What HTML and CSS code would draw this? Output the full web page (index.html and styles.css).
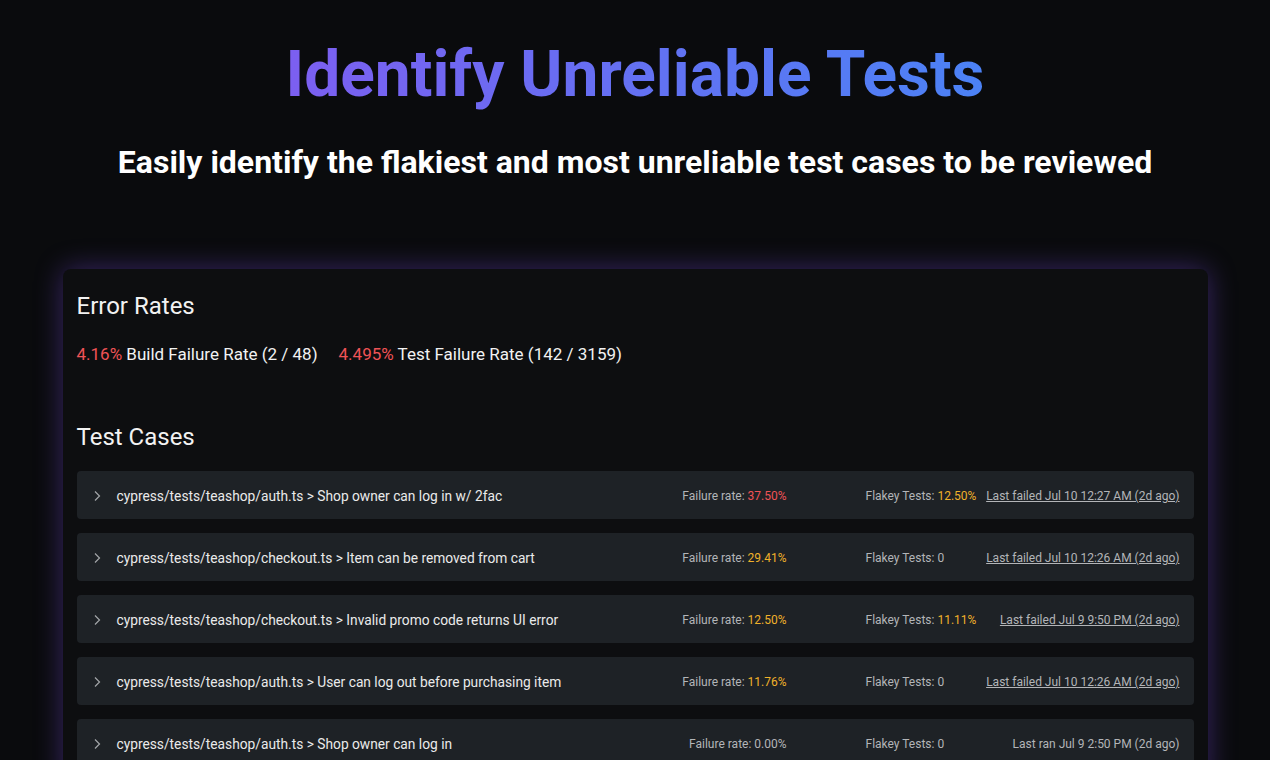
FILE: index.html
```html
<!DOCTYPE html>
<html lang="en">
<head>
    <meta charset="UTF-8">
    <meta name="viewport" content="width=device-width, initial-scale=1.0">
    <title>Identify Unreliable Tests</title>
    <link rel="stylesheet" href="styles.css">
</head>
<body>
    <header class="hero">
        <h1 class="hero-title">Identify Unreliable Tests</h1>
        <p class="hero-sub">Easily identify the flakiest and most unreliable test cases to be reviewed</p>
    </header>

    <div class="card">
        <h2 class="section-title">Error Rates</h2>
        <div class="rates">
            <span><span class="red">4.16%</span> Build Failure Rate (2 / 48)</span>
            <span><span class="red">4.495%</span> Test Failure Rate (142 / 3159)</span>
        </div>

        <h2 class="section-title cases-title">Test Cases</h2>
        <div class="case-list">
            <div class="case">
                <svg class="chevron" width="8" height="12" viewBox="0 0 8 12"><polyline points="2,1.5 6.5,6 2,10.5" /></svg>
                <span class="case-name">cypress/tests/teashop/auth.ts &gt; Shop owner can log in w/ 2fac</span>
                <span class="col-fail">Failure rate: <span class="red">37.50%</span></span>
                <span class="col-flakey">Flakey Tests: <span class="amber">12.50%</span></span>
                <span class="col-last"><a href="#">Last failed Jul 10 12:27 AM (2d ago)</a></span>
            </div>
            <div class="case">
                <svg class="chevron" width="8" height="12" viewBox="0 0 8 12"><polyline points="2,1.5 6.5,6 2,10.5" /></svg>
                <span class="case-name">cypress/tests/teashop/checkout.ts &gt; Item can be removed from cart</span>
                <span class="col-fail">Failure rate: <span class="amber">29.41%</span></span>
                <span class="col-flakey">Flakey Tests: 0</span>
                <span class="col-last"><a href="#">Last failed Jul 10 12:26 AM (2d ago)</a></span>
            </div>
            <div class="case">
                <svg class="chevron" width="8" height="12" viewBox="0 0 8 12"><polyline points="2,1.5 6.5,6 2,10.5" /></svg>
                <span class="case-name">cypress/tests/teashop/checkout.ts &gt; Invalid promo code returns UI error</span>
                <span class="col-fail">Failure rate: <span class="amber">12.50%</span></span>
                <span class="col-flakey">Flakey Tests: <span class="amber">11.11%</span></span>
                <span class="col-last"><a href="#">Last failed Jul 9 9:50 PM (2d ago)</a></span>
            </div>
            <div class="case">
                <svg class="chevron" width="8" height="12" viewBox="0 0 8 12"><polyline points="2,1.5 6.5,6 2,10.5" /></svg>
                <span class="case-name">cypress/tests/teashop/auth.ts &gt; User can log out before purchasing item</span>
                <span class="col-fail">Failure rate: <span class="amber">11.76%</span></span>
                <span class="col-flakey">Flakey Tests: 0</span>
                <span class="col-last"><a href="#">Last failed Jul 10 12:26 AM (2d ago)</a></span>
            </div>
            <div class="case">
                <svg class="chevron" width="8" height="12" viewBox="0 0 8 12"><polyline points="2,1.5 6.5,6 2,10.5" /></svg>
                <span class="case-name">cypress/tests/teashop/auth.ts &gt; Shop owner can log in</span>
                <span class="col-fail">Failure rate: 0.00%</span>
                <span class="col-flakey">Flakey Tests: 0</span>
                <span class="col-last">Last ran Jul 9 2:50 PM (2d ago)</span>
            </div>
        </div>
    </div>
</body>
</html>
```

FILE: styles.css
```css
:root {
    --page-bg: #0a0b0d;
    --card-bg: #0d0e10;
    --row-bg: #1e2226;
    --text-color: #f2f2f2;
    --muted: #b3b5b8;
    --red: #ef5356;
    --amber: #f0b12a;
    --glow: rgba(112, 72, 210, 0.45);
}

body {
    font-family: Roboto, 'Liberation Sans', sans-serif;
    background: var(--page-bg);
    color: var(--text-color);
    margin: 0;
    height: 760px;
    overflow: hidden;
}

.hero {
    text-align: center;
    padding-top: 37px;
}

.hero-title {
    margin: 0;
    font-size: 64px;
    line-height: 76px;
    font-weight: 700;
    display: inline-block;
    background: linear-gradient(to right, #7c5ff0, #4b82f5);
    -webkit-background-clip: text;
    background-clip: text;
    color: transparent;
}

.hero-sub {
    margin: 30px 0 0;
    font-size: 32px;
    line-height: 38px;
    font-weight: 700;
    color: #fff;
}

.card {
    width: 1145px;
    box-sizing: border-box;
    margin: 88px auto 0;
    padding: 22px 14px 20px;
    background: var(--card-bg);
    border-radius: 8px;
    box-shadow: 0 0 28px var(--glow);
}

.section-title {
    margin: 0;
    font-size: 24px;
    line-height: 30px;
    font-weight: 400;
}

.rates {
    margin-top: 23px;
    font-size: 17px;
    line-height: 20px;
    display: flex;
    gap: 21px;
}

.red {
    color: var(--red);
}

.amber {
    color: var(--amber);
}

.cases-title {
    margin-top: 58px;
}

.case-list {
    margin-top: 19px;
    display: flex;
    flex-direction: column;
    gap: 14px;
}

.case {
    display: flex;
    align-items: center;
    height: 48px;
    box-sizing: border-box;
    padding: 2px 14px 0 16px;
    background: var(--row-bg);
    border-radius: 4px;
    font-size: 12px;
    color: var(--muted);
}

.chevron {
    flex: none;
    margin-right: 16px;
    fill: none;
    stroke: #a3a6a9;
    stroke-width: 1.2;
}

.case-name {
    flex: 1;
    font-size: 13.75px;
    color: #eaeaea;
}

.col-fail {
    width: 150px;
    text-align: right;
}

.col-flakey {
    margin-left: 79px;
    width: 112px;
}

.col-last {
    width: 202px;
    text-align: right;
}

.col-last a {
    color: var(--muted);
    text-decoration: underline;
}
```
